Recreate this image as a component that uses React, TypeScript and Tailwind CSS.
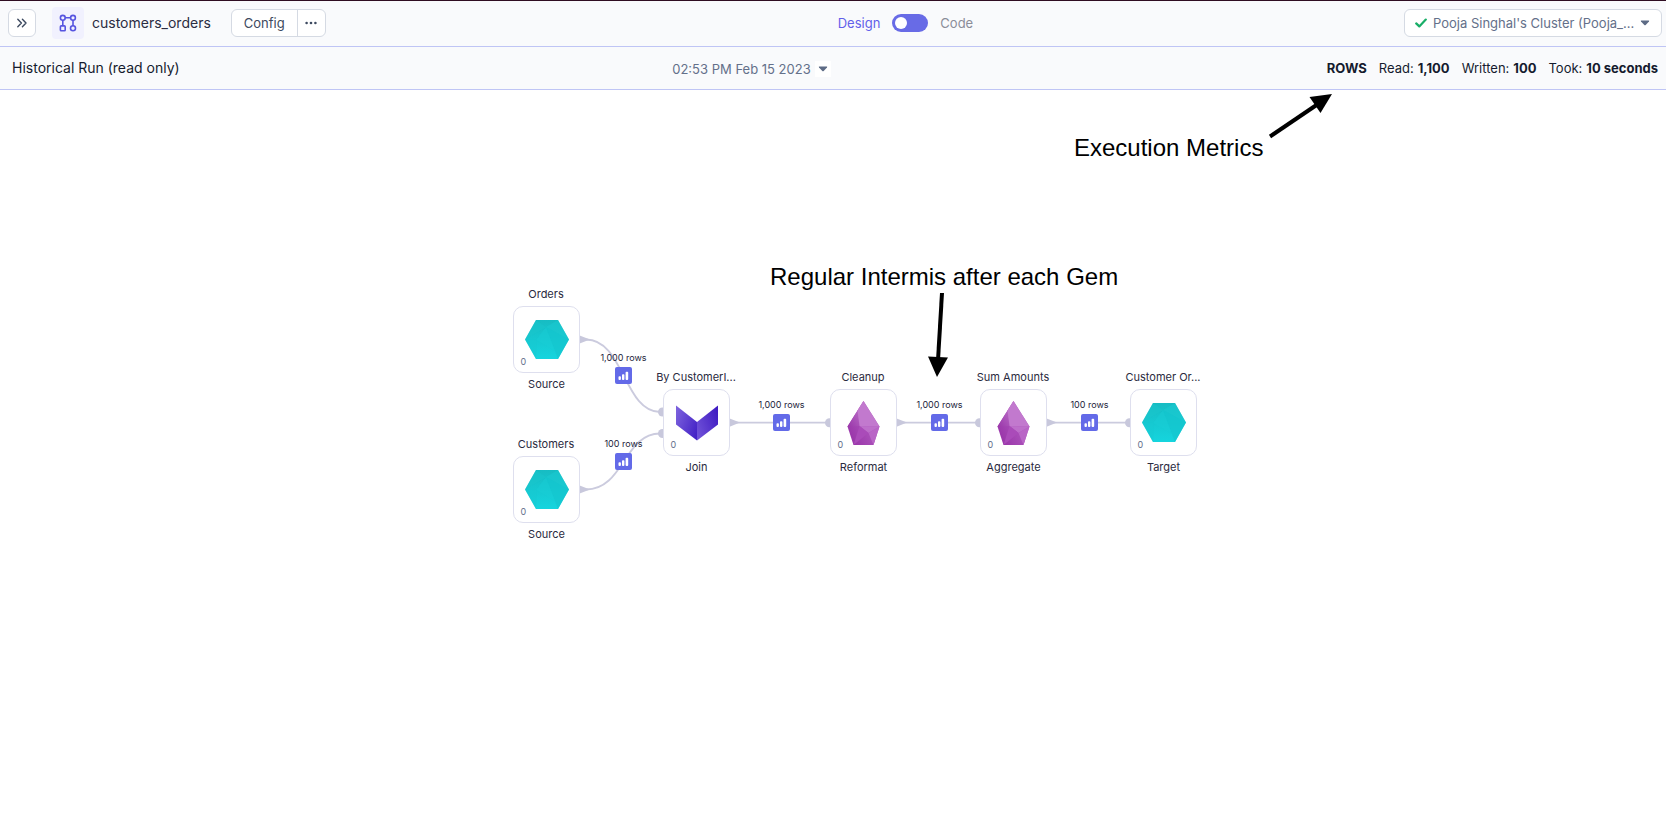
import { useState } from "react";

type GemKind = "hexagon" | "chevron" | "drop";

interface GemNode {
  id: string;
  title: string;
  type: string;
  kind: GemKind;
  place: string;
}

interface Intermediate {
  id: string;
  rows: string;
  place: string;
}

const nodes: GemNode[] = [
  { id: "orders", title: "Orders", type: "Source", kind: "hexagon", place: "left-[506px] top-[196px]" },
  { id: "customers", title: "Customers", type: "Source", kind: "hexagon", place: "left-[506px] top-[346px]" },
  { id: "join", title: "By CustomerI...", type: "Join", kind: "chevron", place: "left-[656px] top-[279px]" },
  { id: "cleanup", title: "Cleanup", type: "Reformat", kind: "drop", place: "left-[823px] top-[279px]" },
  { id: "sum", title: "Sum Amounts", type: "Aggregate", kind: "drop", place: "left-[973px] top-[279px]" },
  { id: "target", title: "Customer Or...", type: "Target", kind: "hexagon", place: "left-[1123px] top-[279px]" },
];

const intermediates: Intermediate[] = [
  { id: "orders-join", rows: "1,000 rows", place: "left-[593px] top-[262px]" },
  { id: "customers-join", rows: "100 rows", place: "left-[593px] top-[348px]" },
  { id: "join-cleanup", rows: "1,000 rows", place: "left-[751px] top-[309px]" },
  { id: "cleanup-sum", rows: "1,000 rows", place: "left-[909px] top-[309px]" },
  { id: "sum-target", rows: "100 rows", place: "left-[1059px] top-[309px]" },
];

function GemIcon({ kind }: { kind: GemKind }) {
  if (kind === "hexagon") {
    return (
      <svg viewBox="0 0 44 44" className="size-11" aria-hidden="true">
        <defs>
          <linearGradient id="teal" x1="0" y1="0" x2="0" y2="1">
            <stop offset="0" stopColor="#17bcc3" />
            <stop offset="1" stopColor="#15d5de" />
          </linearGradient>
        </defs>
        <path d="M11 2H33L44 21.5L33 41H11L0 21.5Z" fill="url(#teal)" />
        <path d="M11 2L21 9L0 21.5Z" fill="#1ac6cc" opacity=".5" />
        <path d="M21 9L33 2L44 21.5Z" fill="#1bcbd2" opacity=".55" />
        <path d="M21 9L33 41L44 21.5Z" fill="#14c6ce" opacity=".7" />
        <path d="M21 9L11 22L30 33Z" fill="#17cdd5" opacity=".5" />
        <path d="M0 21.5H12L11 41Z" fill="#15c9d1" opacity=".5" />
      </svg>
    );
  }
  if (kind === "chevron") {
    return (
      <svg viewBox="0 0 44 44" className="size-11" aria-hidden="true">
        <defs>
          <linearGradient id="violetLeft" x1="0" y1="0.2" x2="1" y2="0.8">
            <stop offset="0" stopColor="#7a60dc" />
            <stop offset="1" stopColor="#4422c6" />
          </linearGradient>
          <linearGradient id="violetRight" x1="0" y1="0.8" x2="1" y2="0.2">
            <stop offset="0" stopColor="#7052d8" />
            <stop offset="1" stopColor="#401cc2" />
          </linearGradient>
        </defs>
        <path d="M1 4.5L22 21V39.5L1 23.5Z" fill="url(#violetLeft)" />
        <path d="M43 4.5L22 21V39.5L43 23.5Z" fill="url(#violetRight)" />
      </svg>
    );
  }
  return (
    <svg viewBox="0 0 44 44" className="size-11" aria-hidden="true">
      <defs>
        <linearGradient id="orchidSide" x1="0.9" y1="0" x2="0.1" y2="1">
          <stop offset="0" stopColor="#c27bce" />
          <stop offset="1" stopColor="#9c3aac" />
        </linearGradient>
        <linearGradient id="orchidBase" x1="1" y1="0" x2="0" y2="0.7">
          <stop offset="0" stopColor="#bc6dc9" />
          <stop offset="1" stopColor="#9a36aa" />
        </linearGradient>
      </defs>
      <path d="M21.5 0L37.5 25.5L31.5 44H11.5L5.5 25.5Z" fill="url(#orchidBase)" />
      <path d="M21.5 0L17.5 25L5.5 25.5Z" fill="url(#orchidSide)" />
      <path d="M21.5 0L37.5 25.5L17.5 25L15.5 9.5Z" fill="#c279ce" />
      <path d="M17.5 25L37.5 25.5L26.5 32Z" fill="#bd6fca" />
      <path d="M17.5 25L26.5 32L11.5 44Z" fill="#aa4bb9" />
      <path d="M26.5 32L31.5 44L37.5 25.5Z" fill="#b965c6" />
    </svg>
  );
}

function NodeCard({ node }: { node: GemNode }) {
  return (
    <div className={`absolute flex w-20 flex-col items-center text-[11px] leading-4 text-[#2a2a40] ${node.place}`}>
      <div className="pb-1 whitespace-nowrap">{node.title}</div>
      <button
        type="button"
        aria-label={`Open ${node.title}`}
        className="relative flex size-[67px] items-center justify-center rounded-[10px] border border-[#dedfee] bg-white pl-px"
      >
        <GemIcon kind={node.kind} />
        <span className="absolute bottom-1 left-[7px] text-[9px] leading-3 text-[#64708a]">0</span>
      </button>
      <div className="pt-[3px] pl-px">{node.type}</div>
    </div>
  );
}

function IntermediateBadge({ item }: { item: Intermediate }) {
  return (
    <div className={`absolute flex w-[61px] flex-col items-center gap-[3px] ${item.place}`}>
      <span className="text-[9px] leading-3 whitespace-nowrap text-[#23233a]">{item.rows}</span>
      <button
        type="button"
        aria-label={`View data, ${item.rows}`}
        className="flex size-[17px] items-center justify-center rounded-xs bg-[#636ae8]"
      >
        <svg viewBox="0 0 11 10" className="h-2.5 w-[11px]" fill="#fff" aria-hidden="true">
          <rect x="0.5" y="5.2" width="2.4" height="3.8" rx="0.9" />
          <rect x="4" y="3.2" width="2.4" height="5.8" rx="0.9" />
          <rect x="7.6" y="0.8" width="2.6" height="8.2" rx="0.9" />
        </svg>
      </button>
    </div>
  );
}

function Edges() {
  return (
    <svg className="pointer-events-none absolute inset-0 size-full overflow-visible" aria-hidden="true">
      <g fill="none" stroke="#cbcbde" strokeWidth="1.8">
        <path d="M586 249.5C624 249.5 624 322 660 322" />
        <path d="M586 399.5C624 399.5 624 343.5 660 343.5" />
        <path d="M730 332.7H830M897 332.7H980M1047 332.7H1130" />
      </g>
      <g fill="#c8c8dc">
        <path d="M579 245.2L590 249.5L579 253.8Z" />
        <path d="M579 395.2L590 399.5L579 403.8Z" />
        <path d="M729 328.3L740 332.6L729 336.9Z" />
        <path d="M896 328.3L907 332.6L896 336.9Z" />
        <path d="M1046 328.3L1057 332.6L1046 336.9Z" />
        <circle cx="662.5" cy="322" r="4.5" />
        <circle cx="662.5" cy="343.5" r="4.5" />
        <circle cx="829.5" cy="332.7" r="4.5" />
        <circle cx="979.5" cy="332.7" r="4.5" />
        <circle cx="1129.5" cy="332.7" r="4.5" />
      </g>
    </svg>
  );
}

function Caret() {
  return (
    <svg viewBox="0 0 10 6" className="h-1.5 w-2.5" fill="#5d6b85" aria-hidden="true">
      <path d="M1.3 0.5H8.7Q9.6 0.6 9 1.4L5.7 4.9Q5 5.5 4.3 4.9L1 1.4Q0.4 0.6 1.3 0.5Z" />
    </svg>
  );
}

function TopBar() {
  const [code, setCode] = useState(false);
  return (
    <header className="grid h-[47px] grid-cols-[838fr_auto_693fr] items-center border-t border-b border-t-[#2f0d22] border-b-[#bfc5f5] bg-[#f9fafc] pb-px">
      <div className="flex items-center pl-2">
        <button
          type="button"
          aria-label="Expand sidebar"
          className="flex size-7 items-center justify-center rounded-md border border-[#d5dae3] bg-white"
        >
          <svg viewBox="0 0 12 10" className="h-2.5 w-3" fill="none" stroke="#3d4a60" strokeWidth="1.4" strokeLinecap="round" strokeLinejoin="round" aria-hidden="true">
            <path d="M1.8 1.2L5.4 5L1.8 8.8M6.4 1.2L10 5L6.4 8.8" />
          </svg>
        </button>
        <div className="ml-4 flex size-8 items-center justify-center rounded-sm bg-[#f1f1fe]">
          <svg viewBox="0 0 18 18" className="size-[18px]" fill="none" stroke="#5654e0" strokeWidth="1.6" aria-hidden="true">
            <circle cx="3.8" cy="3.8" r="2.4" />
            <circle cx="14" cy="3.8" r="2.4" />
            <circle cx="14" cy="14.2" r="2.5" />
            <rect x="1.4" y="11.9" width="4.8" height="4.8" rx="0.8" />
            <path d="M3.8 6.2V11.9M14 6.2V11.7M6.2 3.8H11.6" />
          </svg>
        </div>
        <h1 className="ml-2 text-sm leading-5 text-[#2b2d42]">customers_orders</h1>
        <div className="ml-5 flex h-7 overflow-hidden rounded-md border border-[#d5dae3] bg-white text-[#3d4a60]">
          <button type="button" className="border-r border-[#d5dae3] px-3 text-[13px] leading-5">
            Config
          </button>
          <button type="button" aria-label="More actions" className="flex w-[27px] items-center justify-center">
            <svg viewBox="0 0 12 4" className="h-1 w-3" fill="#3d4a60" aria-hidden="true">
              <circle cx="1.6" cy="2" r="1.3" />
              <circle cx="6" cy="2" r="1.3" />
              <circle cx="10.4" cy="2" r="1.3" />
            </svg>
          </button>
        </div>
      </div>
      <div className="flex items-center gap-3 text-[13px] leading-5">
        <span className="text-[#625fea]">Design</span>
        <button
          type="button"
          role="switch"
          aria-checked={code}
          aria-label="Show code"
          onClick={() => setCode(!code)}
          className={`flex h-[18px] w-9 items-center rounded-full bg-[#686be6] px-[3px] ${code ? "justify-end" : "justify-start"}`}
        >
          <span className="size-3 rounded-full bg-white" />
        </button>
        <span className="text-[#8b8d99]">Code</span>
      </div>
      <div className="flex justify-end pr-1">
        <div className="grid h-7 w-[258px] items-center rounded-md border border-[#d5dae3] bg-white">
          <svg viewBox="0 0 12 10" className="col-start-1 row-start-1 ml-2.5 h-2.5 w-3" fill="none" stroke="#19ae68" strokeWidth="2.2" strokeLinecap="round" strokeLinejoin="round" aria-hidden="true">
            <path d="M1.2 5.4L4.3 8.4L10.8 1.6" />
          </svg>
          <select
            aria-label="Cluster"
            className="col-start-1 row-start-1 h-6 w-full appearance-none bg-transparent pl-7 text-[13px] leading-6 text-[#64708a]"
          >
            <option>Pooja Singhal's Cluster (Pooja_...</option>
          </select>
          <span className="pointer-events-none col-start-1 row-start-1 mr-[11px] justify-self-end">
            <Caret />
          </span>
        </div>
      </div>
    </header>
  );
}

function RunBar() {
  return (
    <section className="grid h-[43px] grid-cols-[672fr_auto_835fr] items-center border-b border-[#bfc5f5] bg-[#f9fafc] text-sm leading-5 text-[#151b2e]">
      <h2 className="pl-3">Historical Run (read only)</h2>
      <div className="flex items-center pt-0.5">
        <select
          aria-label="Run time"
          className="-mr-4 h-6 appearance-none bg-transparent pr-5 text-[13px] leading-6 text-[#64708a] [field-sizing:content]"
        >
          <option>02:53 PM Feb 15 2023</option>
        </select>
        <span className="pointer-events-none flex size-4 items-center justify-center bg-white">
          <Caret />
        </span>
      </div>
      <dl className="flex justify-end gap-3 pr-2 text-[13px]">
        <dt className="font-bold">ROWS</dt>
        <div className="flex gap-1">
          <dt>Read:</dt>
          <dd className="font-bold">1,100</dd>
        </div>
        <div className="flex gap-1">
          <dt>Written:</dt>
          <dd className="font-bold">100</dd>
        </div>
        <div className="flex gap-1">
          <dt>Took:</dt>
          <dd className="font-bold">10 seconds</dd>
        </div>
      </dl>
    </section>
  );
}

function Annotations() {
  return (
    <div className="font-['Liberation_Sans',Arial,sans-serif] text-2xl leading-8 whitespace-nowrap text-black">
      <p className="absolute top-[42px] left-[1074px]">Execution Metrics</p>
      <p className="absolute top-[171px] left-[770px]">Regular Intermis after each Gem</p>
      <svg className="pointer-events-none absolute inset-0 size-full overflow-visible" aria-hidden="true">
        <path d="M1270 46.5L1318 14" stroke="#000" strokeWidth="4" />
        <path d="M1332 4L1309.5 7L1320.5 23Z" />
        <path d="M942 203L938 270" stroke="#000" strokeWidth="4" />
        <path d="M928 266.5L948 267.5L937 287Z" />
      </svg>
    </div>
  );
}

export default function App() {
  return (
    <div className="flex min-h-screen flex-col bg-white font-[Inter,sans-serif]">
      <TopBar />
      <RunBar />
      <main className="relative min-h-[480px] flex-1 overflow-hidden">
        <Edges />
        {nodes.map((node) => (
          <NodeCard key={node.id} node={node} />
        ))}
        {intermediates.map((item) => (
          <IntermediateBadge key={item.id} item={item} />
        ))}
        <Annotations />
      </main>
    </div>
  );
}
